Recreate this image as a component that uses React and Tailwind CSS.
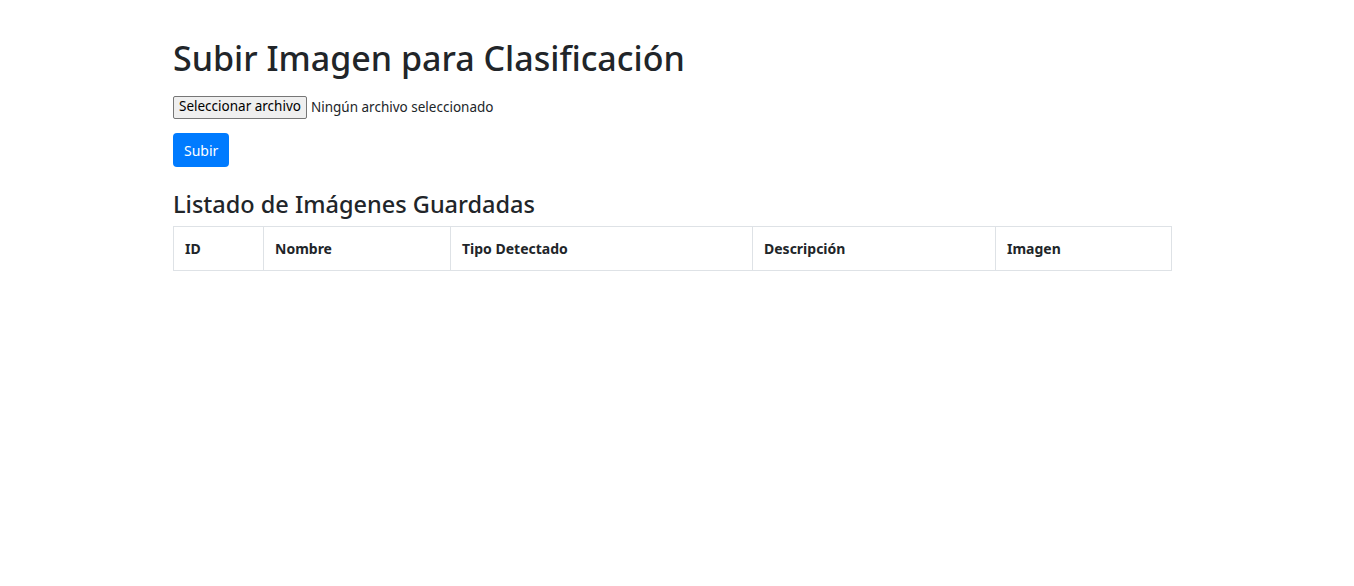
import React from 'react';

const cols = [
  { label: 'ID', w: 'w-[90px]' },
  { label: 'Nombre', w: 'w-[187px]' },
  { label: 'Tipo Detectado', w: 'w-[302px]' },
  { label: 'Descripción', w: 'w-[243px]' },
  { label: 'Imagen', w: 'w-[176px]' },
];

export default function App() {
  return (
    <div className="min-h-[586px] bg-white text-[#212529] font-['Noto_Sans',sans-serif]">
      <div className="ml-[173px] w-[999px] pt-[37px]">
        <h1 className="text-[34px] leading-[42px] font-medium mb-[16px]">Subir Imagen para Clasificación</h1>

        <form className="flex flex-col items-start">
          <div className="flex items-center gap-[4px] h-[24px] text-[13.5px]">
            <button
              type="button"
              className="h-[23px] px-[5px] bg-[#efefef] border border-[#767676] rounded-[2px] text-[13.5px] text-black leading-none"
            >
              Seleccionar archivo
            </button>
            <span>Ningún archivo seleccionado</span>
          </div>
          <button
            type="button"
            className="mt-[14px] h-[34px] px-[11px] rounded-[4px] bg-[#007bff] text-white text-[14px] leading-[1.5]"
          >
            Subir
          </button>
        </form>

        <h2 className="mt-[23px] text-[23.5px] leading-[29px] font-medium mb-[7px]">Listado de Imágenes Guardadas</h2>

        <table className="w-[999px] border-collapse table-fixed text-[14px]">
          <thead>
            <tr>
              {cols.map((c) => (
                <th
                  key={c.label}
                  className={`${c.w} border border-[#dee2e6] px-[11px] h-[44px] text-left font-bold align-middle`}
                >
                  {c.label}
                </th>
              ))}
            </tr>
          </thead>
          <tbody></tbody>
        </table>
      </div>
    </div>
  );
}
